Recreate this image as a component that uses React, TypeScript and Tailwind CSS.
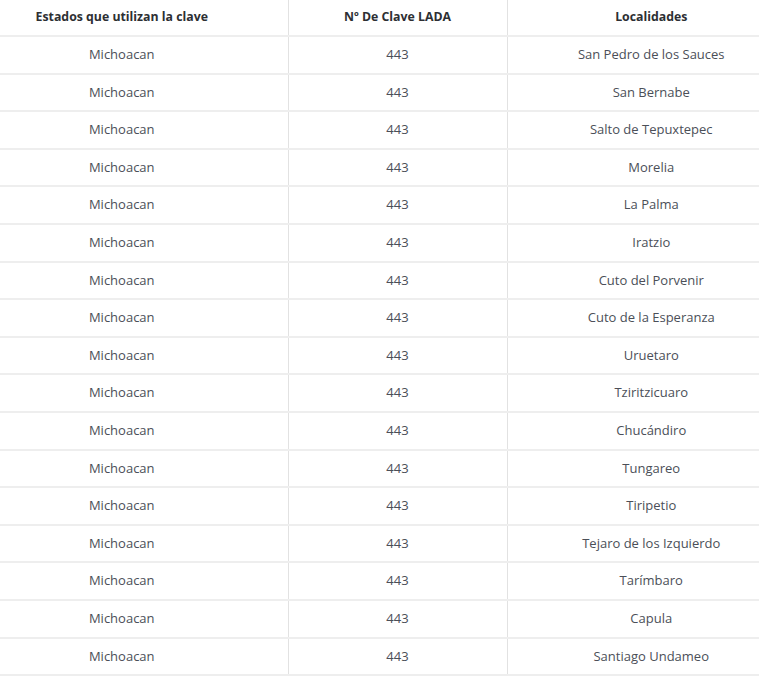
const localidades = [
  'San Pedro de los Sauces',
  'San Bernabe',
  'Salto de Tepuxtepec',
  'Morelia',
  'La Palma',
  'Iratzio',
  'Cuto del Porvenir',
  'Cuto de la Esperanza',
  'Uruetaro',
  'Tziritzicuaro',
  'Chucándiro',
  'Tungareo',
  'Tiripetio',
  'Tejaro de los Izquierdo',
  'Tarímbaro',
  'Capula',
  'Santiago Undameo',
]

export default function App() {
  return (
    <div className="h-[679px] w-[759px] overflow-hidden bg-white font-['Open_Sans',sans-serif]">
      <table className="ml-[-44px] w-[839px] table-fixed border-collapse text-center">
        <colgroup>
          <col className="w-[332px]" />
          <col className="w-[219px]" />
          <col className="w-[288px]" />
        </colgroup>
        <thead>
          <tr className="h-[36px] border-b-2 border-[#eeeeee] text-[12.3px] font-bold text-[#2d2f33]">
            <th className="border-r border-[#e2e2e2]">Estados que utilizan la clave</th>
            <th className="border-r border-[#e2e2e2]">Nº De Clave LADA</th>
            <th>Localidades</th>
          </tr>
        </thead>
        <tbody>
          {localidades.map((loc) => (
            <tr key={loc} className="h-[37.6px] border-b-2 border-[#eeeeee] text-[13px] text-[#4b4f58]">
              <td className="border-r border-[#e2e2e2]">Michoacan</td>
              <td className="border-r border-[#e2e2e2]">443</td>
              <td>{loc}</td>
            </tr>
          ))}
        </tbody>
      </table>
    </div>
  )
}
